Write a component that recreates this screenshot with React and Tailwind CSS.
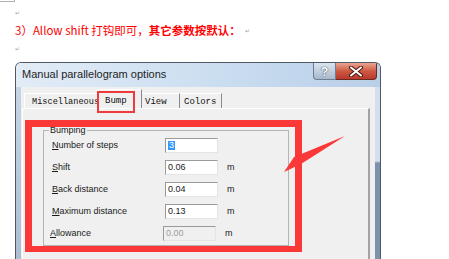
export default function App() {
  const rows = [
    { key: "N", rest: "umber of steps", value: "3", unit: "", selected: true },
    { key: "S", rest: "hift", value: "0.06", unit: "m" },
    { key: "B", rest: "ack distance", value: "0.04", unit: "m" },
    { key: "M", rest: "aximum distance", value: "0.13", unit: "m" },
    { key: "A", rest: "llowance", value: "0.00", unit: "m", disabled: true },
  ]

  return (
    <div className="relative w-[449px] h-[259px] overflow-hidden bg-white font-['Liberation_Sans',sans-serif]">
      {/* page corner mark */}
      <div className="h-[2px] w-[15px] border-b border-r border-[#b0b0b0]" />

      <div className="h-[22px] pl-[15px] flex items-center">
        <span className="text-[6px] leading-none text-[#a8a8a8]">↵</span>
      </div>

      <div className="h-[14px] pl-[15px] flex items-center text-[11.5px] leading-none text-[#ff0000] font-['Noto_Sans_CJK_SC',sans-serif] whitespace-nowrap">
        <span>3）Allow shift 打钩即可，</span>
        <span className="font-bold">其它参数按默认：</span>
        <span className="ml-[4px] text-[6px] text-[#a8a8a8]">↵</span>
      </div>

      <div className="h-[22px] pl-[15px] flex items-center">
        <span className="text-[6px] leading-none text-[#a8a8a8]">↵</span>
      </div>

      {/* dialog */}
      <div className="mt-[2px] ml-[15px] w-[366px] h-[220px] flex flex-col rounded-t-[6px] border border-b-0 border-[#4f5965] overflow-hidden">
        <div className="h-[24px] flex items-start justify-between bg-linear-to-r from-[#e2ecf7] via-[#cddff1] to-[#b9cfe8]">
          <div className="pl-[6px] pt-[6px] text-[11px] leading-none text-[#1e1e1e]">Manual parallelogram options</div>
          <div className="flex mr-[3px]">
            <div className="w-[23px] h-[17px] rounded-bl-[4px] border border-t-0 border-[#6c7d92] bg-linear-to-b from-[#dbe5f0] to-[#a9b9cc] flex items-center justify-center">
              <span className="text-[13px] leading-none font-bold text-white [text-shadow:0_0_1px_#3a4450,0_0_1px_#3a4450]">?</span>
            </div>
            <div className="w-[41px] h-[17px] rounded-br-[4px] border border-t-0 border-l-0 border-[#6b2a20] bg-linear-to-b from-[#e8a594] via-[#cf5a43] to-[#b8392a] flex items-center justify-center">
              <svg width="14" height="11" viewBox="0 0 14 11">
                <path d="M2 1.5 L12 9.5 M12 1.5 L2 9.5" stroke="#4a1a12" strokeWidth="4" strokeLinecap="round" />
                <path d="M2 1.5 L12 9.5 M12 1.5 L2 9.5" stroke="#ffffff" strokeWidth="2" strokeLinecap="round" />
              </svg>
            </div>
          </div>
        </div>

        <div className="flex flex-1">
          <div className="w-[5px] bg-linear-to-b from-[#c6d5e6] to-[#a9bbd0]" />
          <div className="flex-1 bg-[#f0f0f0] flex flex-col">
            {/* tabs */}
            <div className="h-[21px] flex items-end pl-[3px] font-['Liberation_Mono',monospace] text-[8.6px] leading-none text-[#101010] whitespace-nowrap">
              <div className="w-[73px] h-[15px] pl-[7px] pt-[4px] border-t border-l border-white">Miscellaneous</div>
              <div className="w-[45px] h-[19px] pl-[7px] pt-[7px] border-t border-l border-white border-r border-r-[#8a8a8a] bg-[#f0f0f0] text-[9px]">Bump</div>
              <div className="w-[38px] h-[15px] pl-[3px] pt-[4px] border-t border-white border-r border-r-[#8a8a8a] text-[9px]">View</div>
              <div className="w-[42px] h-[15px] pl-[4px] pt-[4px] border-t border-white border-r border-r-[#8a8a8a] text-[9px]">Colors</div>
            </div>

            {/* tab page */}
            <div className="ml-[1px] w-[348px] flex-1 border-t border-l border-white border-r-2 border-r-[#a3a3a3]">
              <fieldset className="ml-[20px] mt-[16px] w-[246px] border border-[#b4b4b4]">
                <legend className="ml-[5px] px-[1px] text-[9px] leading-[11px] text-[#1a1a1a]">Bumping</legend>
                <div className="pl-[8px] pt-[2px] pb-[4px] flex flex-col gap-[7px] text-[9px] leading-none text-[#1a1a1a]">
                  {rows.map((r) => (
                    <div key={r.key} className="h-[15px] flex items-center">
                      <div className={r.disabled ? "w-[113px] -ml-[2px] pr-[-2px]" : "w-[113px]"}>
                        <span className="underline underline-offset-1">{r.key}</span>
                        {r.rest}
                      </div>
                      <div
                        className={
                          "w-[53px] h-[15px] flex items-center pl-[2px] border border-t-[#9a9a9a] border-l-[#9a9a9a] border-b-[#e4e4e4] border-r-[#e4e4e4] " +
                          (r.disabled ? "bg-[#f0f0f0] text-[#9c9c9c]" : "bg-white")
                        }
                      >
                        {r.selected ? <span className="bg-[#3399ff] text-white px-[1px]">{r.value}</span> : r.value}
                      </div>
                      <div className="ml-[9px]">{r.unit}</div>
                    </div>
                  ))}
                </div>
              </fieldset>
            </div>
          </div>
          <div className="w-[5px] bg-linear-to-b from-[#d3dfec] from-[38%] to-[#7d93ad] to-[39%]" />
        </div>
      </div>

      {/* annotations */}
      <div className="absolute left-[97px] top-[91px] w-[38px] h-[22px] border-2 border-[#ef3b3b]" />
      <div className="absolute left-[25px] top-[120px] w-[277px] h-[132px] border-[7px] border-b-[6px] border-[#fb3838]" />
      <svg className="absolute left-0 top-0 pointer-events-none" width="449" height="259">
        <polygon points="284,172 294,157 345,136 301,164" fill="#fb3838" />
      </svg>
    </div>
  )
}
